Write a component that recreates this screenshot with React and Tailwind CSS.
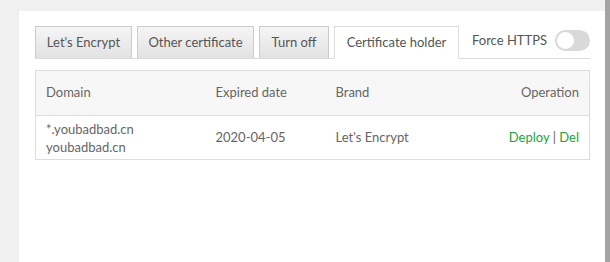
export default function App() {
    const tabs = [
        { label: "Let's Encrypt", w: "w-[97px]" },
        { label: "Other certificate", w: "w-[117px]" },
        { label: "Turn off", w: "w-[70px]" },
    ];

    return (
        <div className="w-[610px] h-[262px] bg-[#f0f0f0] flex overflow-hidden" style={{ fontFamily: 'Lato, "Noto Sans", sans-serif' }}>
            <div className="ml-[19px] mt-[11px] w-[586px] h-[251px] bg-white pl-[16px] pr-[15px] pt-[16px] text-[13px] text-[#666]">
                <div className="flex items-end border-b border-[#ddd] h-[32px]">
                    {tabs.map((t) => (
                        <div
                            key={t.label}
                            className={`${t.w} h-[32px] mr-[5px] flex items-center justify-center whitespace-nowrap border border-[#ccc] border-b-0 bg-gradient-to-b from-[#f5f5f5] to-[#e2e2e2] text-[#555]`}
                        >
                            {t.label}
                        </div>
                    ))}
                    <div className="w-[125px] h-[33px] -mb-px flex items-center justify-center whitespace-nowrap border border-[#ddd] border-b-white bg-white text-[#555]">
                        Certificate holder
                    </div>
                    <div className="flex-1 flex items-start h-full pt-[4px] pl-[13px] whitespace-nowrap">
                        <span className="text-[#555]">Force HTTPS</span>
                        <div className="ml-auto mt-[-1px] w-[35px] h-[21px] rounded-full bg-[#d9d9d9] flex items-center px-[2px]">
                            <div className="w-[17px] h-[17px] rounded-full bg-white"></div>
                        </div>
                    </div>
                </div>
                <table className="w-full mt-[11px] border border-[#ddd] border-collapse">
                    <thead className="bg-[#f7f7f7]">
                        <tr className="h-[45px]">
                            <th className="font-normal text-left pl-[10px] w-[180px]">Domain</th>
                            <th className="font-normal text-left w-[120px]">Expired date</th>
                            <th className="font-normal text-left">Brand</th>
                            <th className="font-normal text-right pr-[10px]">Operation</th>
                        </tr>
                    </thead>
                    <tbody>
                        <tr className="border-t border-[#ddd] h-[44px]">
                            <td className="pl-[10px] leading-[18px] pt-[1px]">
                                *.youbadbad.cn
                                <br />
                                youbadbad.cn
                            </td>
                            <td>2020-04-05</td>
                            <td>Let's Encrypt</td>
                            <td className="text-right pr-[10px] text-[#20a53a]">
                                Deploy <span className="text-[#666]">|</span> Del
                            </td>
                        </tr>
                    </tbody>
                </table>
            </div>
            <div className="w-[5px] h-full bg-[#a3a3a3]"></div>
        </div>
    );
}
